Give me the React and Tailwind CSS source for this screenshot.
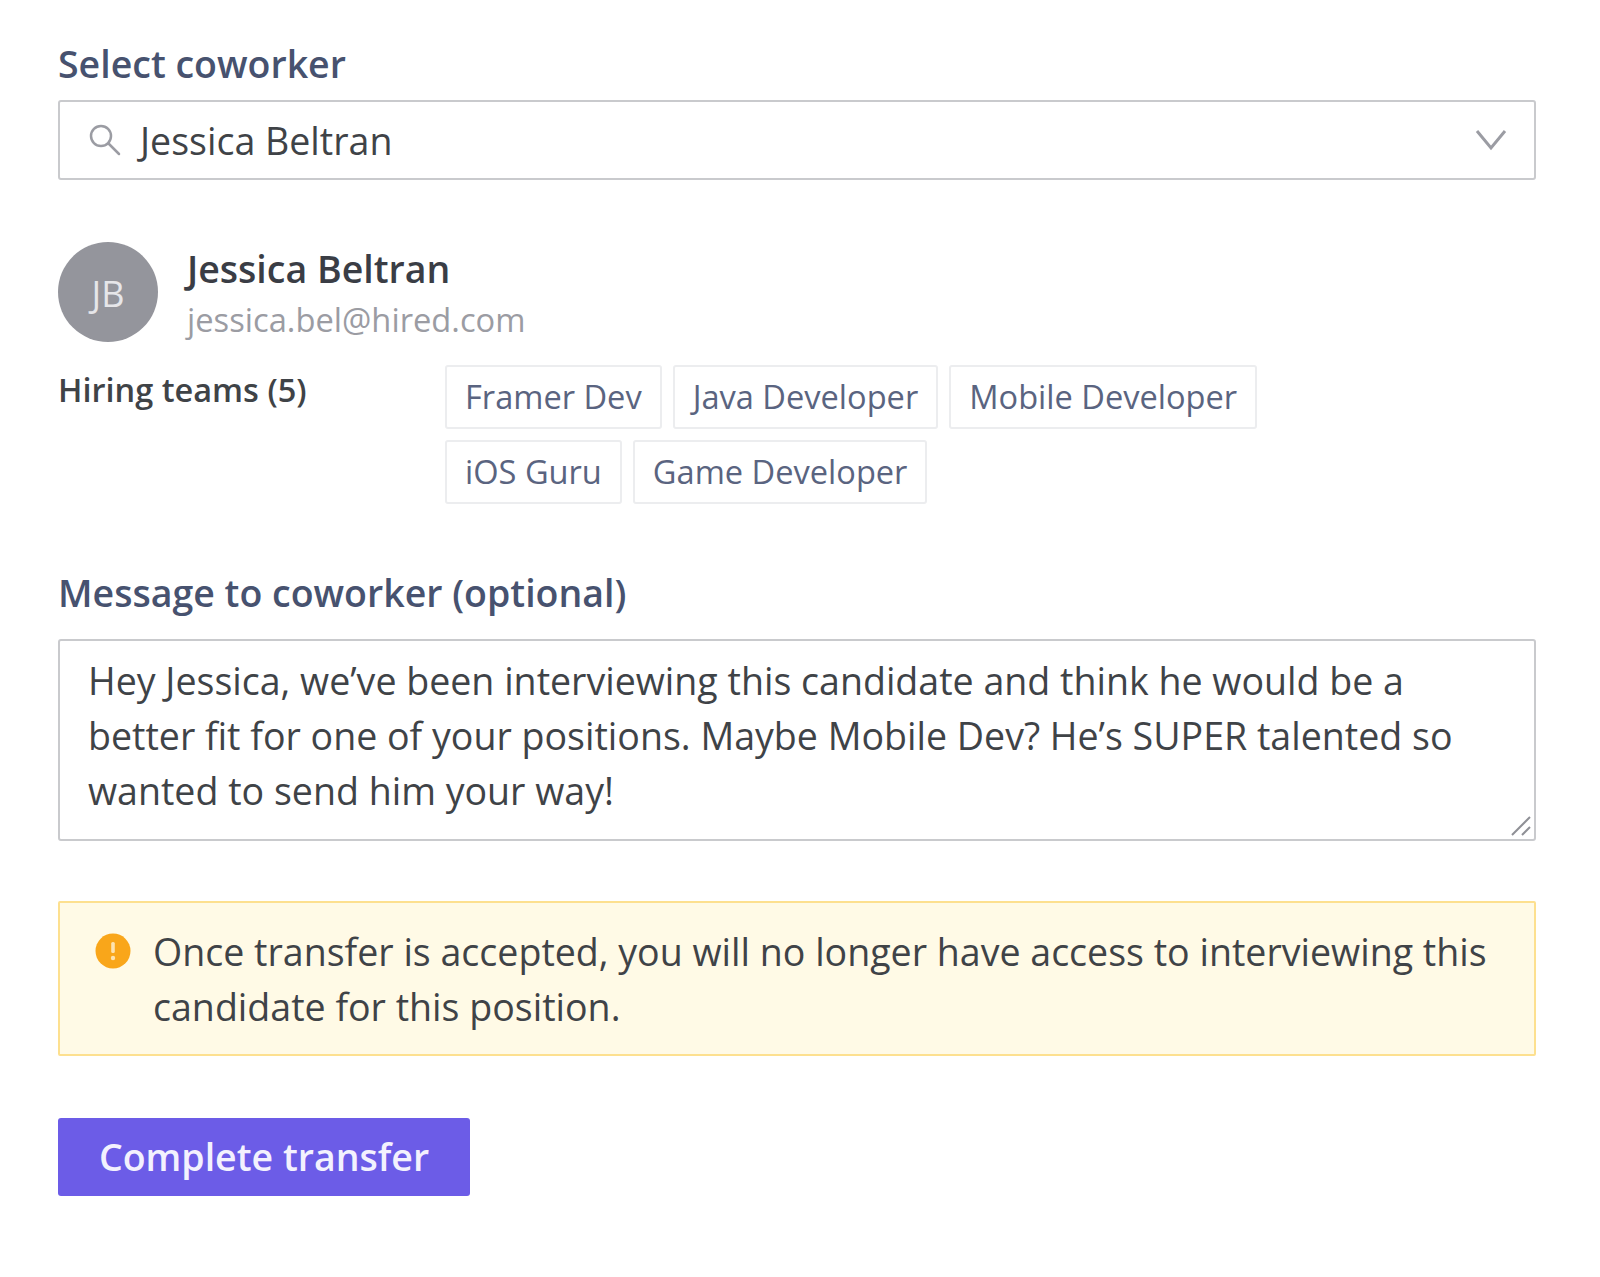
import React from 'react';

const teams = [
  ['Framer Dev', 'Java Developer', 'Mobile Developer'],
  ['iOS Guru', 'Game Developer'],
];

const App = () => {
  return (
    <div className="w-[1600px] h-[1277px] bg-white pl-[58px] pr-[64px] pt-[40px] font-['Open_Sans',sans-serif] text-[#3f4347]">
      <label className="block text-[37.5px] leading-[48px] font-semibold text-[#47526f]">Select coworker</label>

      {/* Coworker select */}
      <div className="mt-[12px] h-[80px] flex items-center border-2 border-[#c9cacd] rounded-[3px] pl-[28px] pr-[27px]">
        <svg width="34" height="34" viewBox="0 0 34 34" fill="none" stroke="#9b9ca3" strokeWidth="2.5" strokeLinecap="round">
          <circle cx="13" cy="13" r="10" />
          <path d="M20.5 20.5 L31 31" />
        </svg>
        <span className="ml-[18px] flex-1 pt-[2px] text-[37.55px] leading-[48px]">Jessica Beltran</span>
        <svg width="32" height="22" viewBox="0 0 32 22" fill="none" stroke="#9b9ca3" strokeWidth="3">
          <path d="M2 2 L16 19 L30 2" />
        </svg>
      </div>

      {/* Selected coworker */}
      <div className="mt-[62px] flex items-center">
        <div className="w-[100px] h-[100px] pt-[3px] rounded-full bg-[#94959c] flex items-center justify-center text-[36px] text-[#e6e6e9]">JB</div>
        <div className="ml-[29px] pt-[3px]">
          <div className="text-[37.5px] leading-[48px] font-semibold text-[#3a3d45]">Jessica Beltran</div>
          <div className="mt-[5px] text-[32.7px] leading-[44px] text-[#9b9ca3]">jessica.bel@hired.com</div>
        </div>
      </div>

      <div className="mt-[23px] flex">
        <div className="w-[387px] text-[32.5px] leading-[48px] font-semibold text-[#3f4347] mt-[1px]">Hiring teams (5)</div>
        <div className="flex flex-col gap-[11px]">
          {teams.map((row, i) => (
            <div key={i} className="flex gap-[11px]">
              {row.map((t) => (
                <span key={t} className="h-[64px] flex items-center pt-[1px] px-[18px] border-2 border-[#ecedef] rounded-[3px] text-[32.6px] text-[#5a6480]">{t}</span>
              ))}
            </div>
          ))}
        </div>
      </div>

      <label className="block mt-[65px] text-[37.5px] leading-[48px] font-semibold text-[#47526f]">Message to coworker (optional)</label>

      {/* Message */}
      <div className="relative mt-[22px] h-[202px] border-2 border-[#c9cacd] rounded-[3px] pl-[28px] pr-[20px] pt-[12px] text-[37.55px] leading-[55px]">
        Hey Jessica, we’ve been interviewing this candidate and think he would be a better fit for one of your positions. Maybe Mobile Dev? He’s SUPER talented so wanted to send him your way!
        <svg className="absolute right-[2px] bottom-[2px]" width="22" height="22" viewBox="0 0 22 22" stroke="#8f9096" strokeWidth="2" fill="none">
          <path d="M2 20 L20 2 M12 20 L20 12" />
        </svg>
      </div>

      {/* Warning */}
      <div className="mt-[60px] h-[155px] flex border-2 border-[#fde08f] bg-[#fffae6] rounded-[2px] pl-[35px] pr-[20px] pt-[21px]">
        <svg className="shrink-0 mt-[9px]" width="36" height="36" viewBox="0 0 36 36">
          <circle cx="18" cy="18" r="17.5" fill="#f9a61a" />
          <rect x="16.2" y="9" width="3.6" height="11" rx="1.5" fill="#fde3b0" />
          <circle cx="18" cy="25" r="2.2" fill="#fde3b0" />
        </svg>
        <p className="ml-[22px] text-[37.55px] leading-[55px]">Once transfer is accepted, you will no longer have access to interviewing this candidate for this position.</p>
      </div>

      <button className="mt-[62px] w-[412px] h-[78px] bg-[#6c5ce7] rounded-[3px] text-[37.5px] font-semibold text-[#f3f1fe] flex items-center justify-center">Complete transfer</button>
    </div>
  );
};

export default App;
